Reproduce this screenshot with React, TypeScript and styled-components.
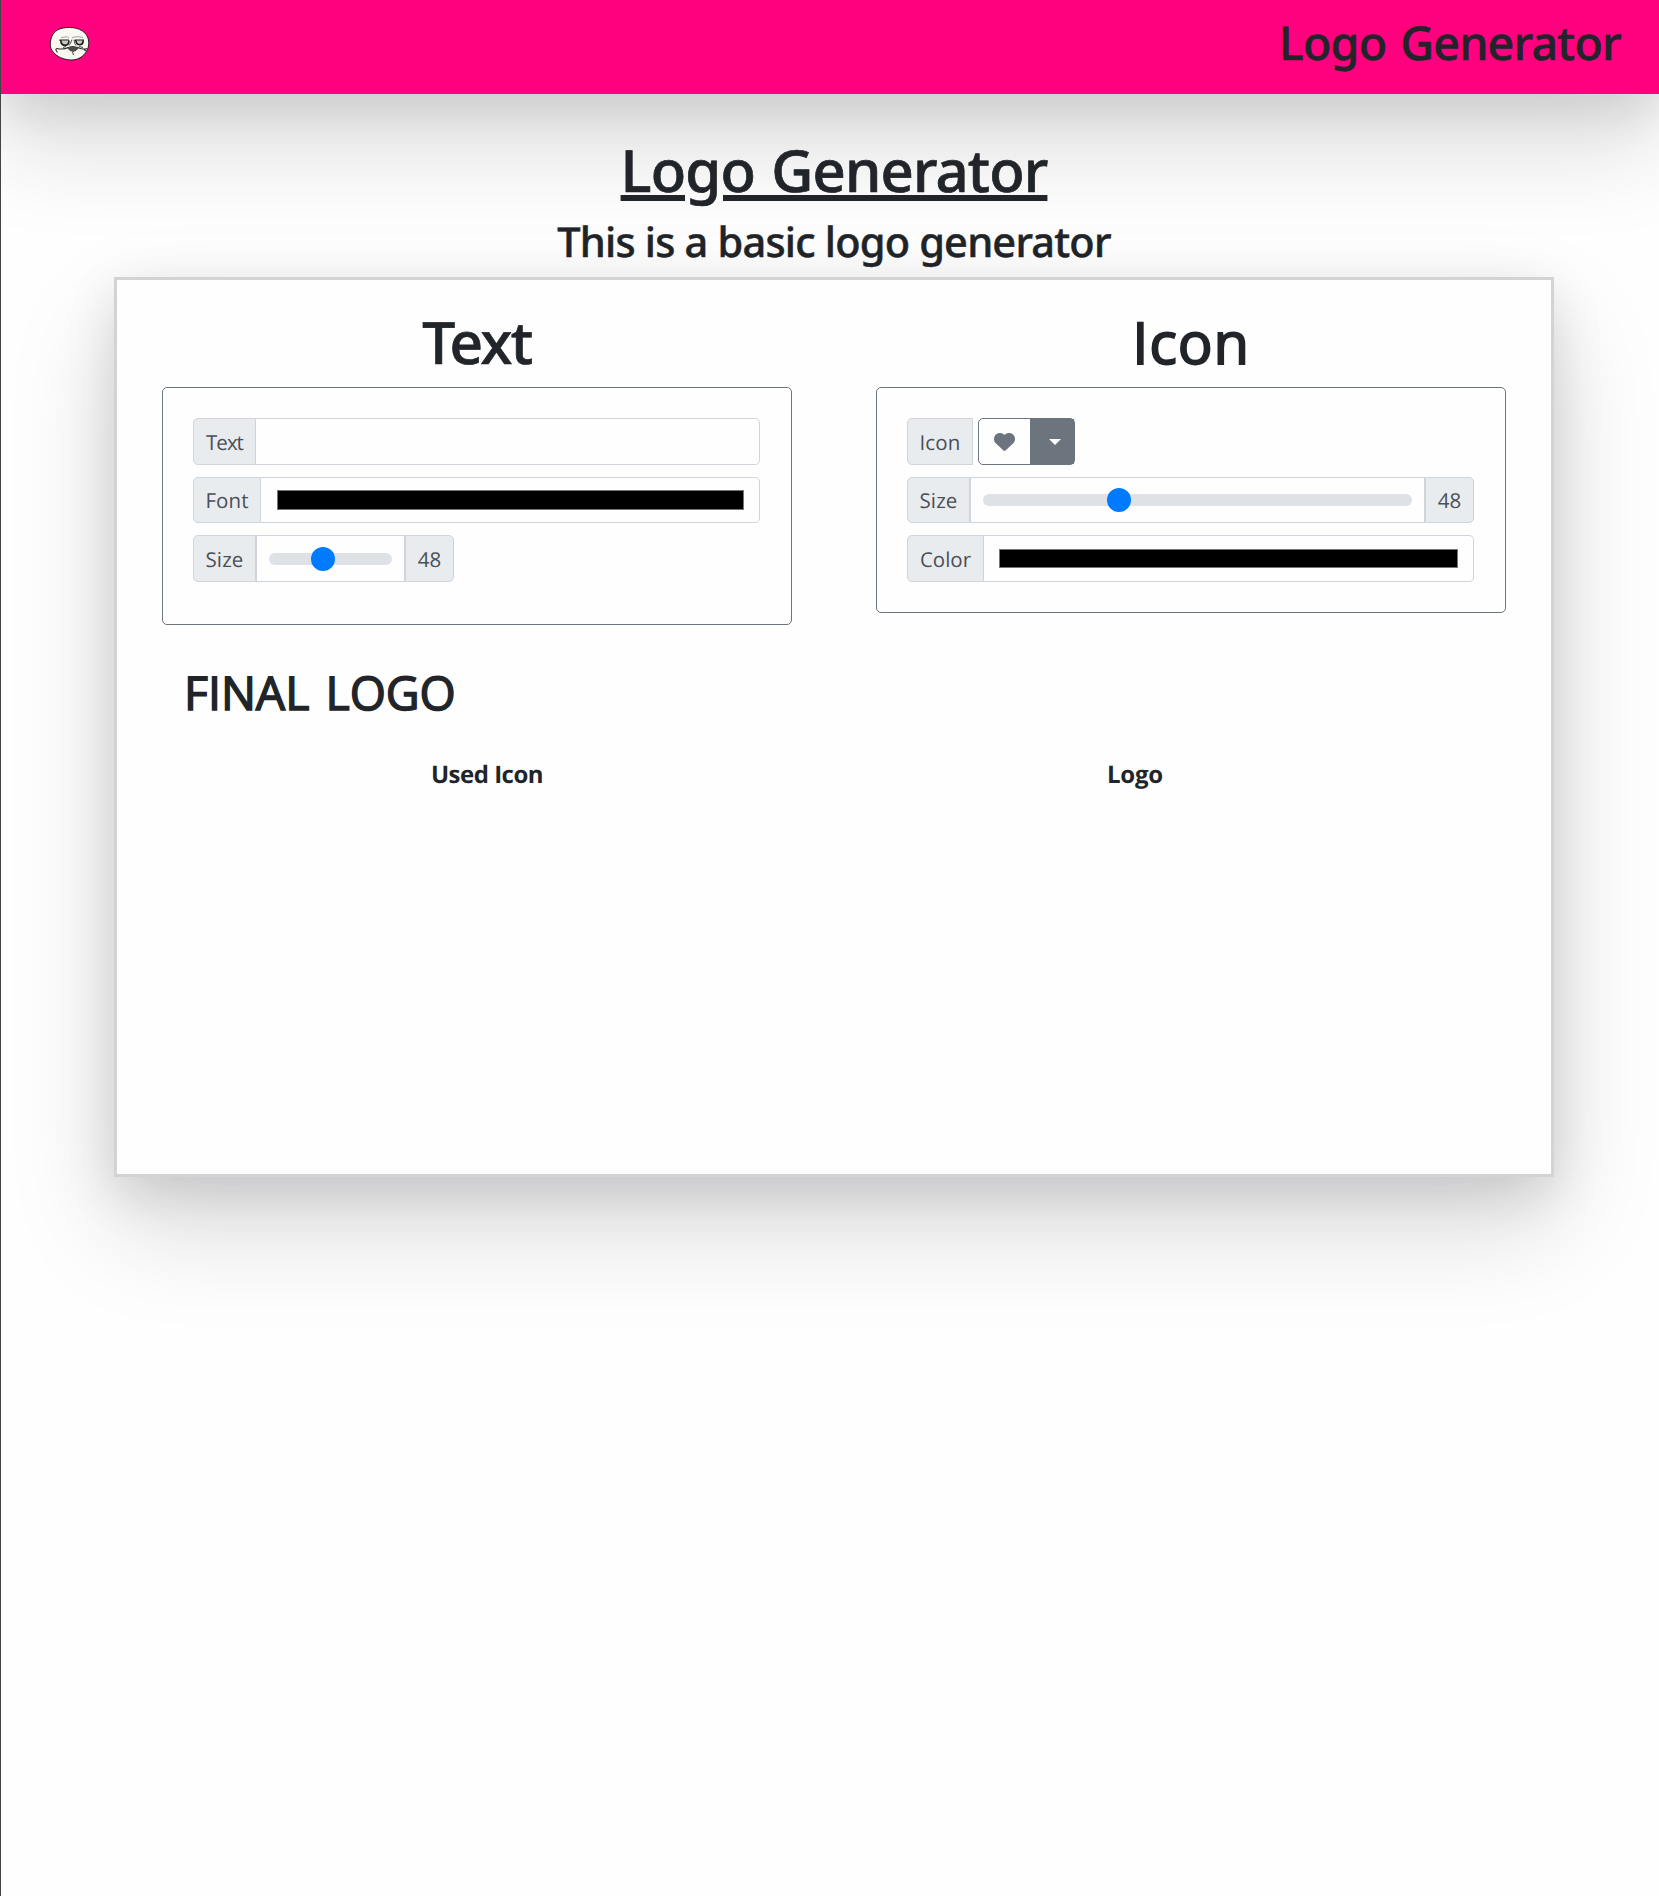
import React, { useState } from "react";
import styled, { createGlobalStyle } from "styled-components";

const GlobalStyle = createGlobalStyle`
  *, *::before, *::after { box-sizing: border-box; }
  body {
    margin: 0;
    background: #fefefe;
    color: #212529;
    font-family: "Open Sans", "Noto Sans", sans-serif;
    text-rendering: geometricPrecision;
  }
`;

const liftedShadow = "0 48px 100px rgba(17, 12, 30, 0.15), 0 16px 48px rgba(0, 0, 0, 0.12)";

const Page = styled.div`
  min-height: 1896px;
  border-left: 1px solid #444;
  overflow: hidden;
`;

const Header = styled.header`
  display: flex;
  align-items: center;
  justify-content: space-between;
  height: 94px;
  padding: 0 38px 6px 48px;
  background: #ff007f;
  box-shadow: ${liftedShadow};
`;

const Mascot = styled.svg`
  display: block;
  width: 41px;
  height: 36px;
`;

const Heading = styled.h1<{ $size: number; $line: number; $spacing?: number; $word?: number }>`
  margin: 0;
  font-family: "Noto Sans", "Open Sans", sans-serif;
  font-size: ${(p) => p.$size}px;
  line-height: ${(p) => p.$line}px;
  letter-spacing: ${(p) => p.$spacing ?? 0}px;
  word-spacing: ${(p) => p.$word ?? 0}px;
  font-weight: 500;
  -webkit-text-stroke: 0.012em currentColor;
  white-space: nowrap;
`;

const PlainHeading = styled(Heading)`
  font-family: "Open Sans", sans-serif;
  font-weight: 400;
  -webkit-text-stroke: 0.032em currentColor;
`;

const Brand = styled(Heading)`
  margin-bottom: 5px;
`;

const Title = styled(Heading)`
  text-decoration: underline;
  text-decoration-thickness: 5.5px;
  text-underline-offset: 3px;
`;

const Subtitle = styled(Heading)`
  padding-top: 1px;
`;

const Main = styled.main`
  display: flex;
  flex-direction: column;
  align-items: center;
  padding: 40px 0 0 8px;
`;

const Card = styled.section`
  width: 1440px;
  height: 900px;
  padding: 26px 3px 0;
  border: 3px solid #d3d3d3;
  background: #fefefe;
  box-shadow: ${liftedShadow};
`;

const Editors = styled.div`
  display: grid;
  grid-template-columns: 1fr 1fr;
  align-items: start;
`;

const Editor = styled.div`
  display: flex;
  flex-direction: column;
  align-items: center;
  gap: 9px;
  padding: 0 42px;
`;

const Panel = styled.div<{ $height: number }>`
  display: grid;
  grid-template-rows: 47px 46px 47px;
  gap: 12px;
  width: 100%;
  height: ${(p) => p.$height}px;
  padding: 30px 31px 30px 30px;
  border: 1px solid #6c757d;
  border-radius: 5px;
`;

const Group = styled.div<{ $width?: number }>`
  display: flex;
  width: ${(p) => (p.$width ? `${p.$width}px` : "100%")};
`;

const Addon = styled.span<{ $width: number; $spacing?: number; $end?: boolean }>`
  display: flex;
  flex: none;
  align-items: center;
  justify-content: center;
  width: ${(p) => p.$width}px;
  padding-top: 2px;
  border: 1px solid #ced4da;
  border-radius: ${(p) => (p.$end ? "0 5px 5px 0" : "5px 0 0 5px")};
  background: #e9ecef;
  color: #495057;
  font-size: 20.5px;
  letter-spacing: ${(p) => p.$spacing ?? 0}px;
`;

const TextField = styled.input`
  flex: 1;
  min-width: 0;
  padding: 0 15px;
  border: 1px solid #ced4da;
  border-left: 0;
  border-radius: 0 5px 5px 0;
  outline: 0;
  background: transparent;
  font: inherit;
`;

const ColorField = styled.div<{ $inset: number; $start: number }>`
  display: flex;
  flex: 1;
  padding: ${(p) => `${p.$inset}px 15px ${p.$inset}px ${p.$start}px`};
  border: 1px solid #ced4da;
  border-left: 0;
  border-radius: 0 5px 5px 0;
`;

const Swatch = styled.span`
  flex: 1;
  border: 1px solid #767676;
  background: #000;
`;

const RangeField = styled.div`
  display: flex;
  flex: 1;
  align-items: center;
  min-width: 0;
  padding: 0 12px;
  border: 1px solid #ced4da;
`;

const Range = styled.input`
  flex: 1;
  min-width: 0;
  height: 24px;
  margin: 0;
  appearance: none;
  background: transparent;

  &::-webkit-slider-runnable-track {
    height: 12px;
    border-radius: 6px;
    background: #dee2e6;
  }

  &::-webkit-slider-thumb {
    appearance: none;
    width: 24px;
    height: 24px;
    margin-top: -6px;
    border-radius: 50%;
    background: #007bff;
  }
`;

const IconPicker = styled.div`
  display: flex;
  width: 97px;
  margin-left: 5px;
  border: 1px solid #6c757d;
  border-radius: 5px;
`;

const IconPreview = styled.span`
  display: flex;
  align-items: center;
  justify-content: center;
  width: 51px;
`;

const IconToggle = styled.button`
  display: flex;
  flex: 1;
  align-items: center;
  justify-content: center;
  padding: 0 0 0 6px;
  border: 0;
  background: #6c757d;
`;

const Caret = styled.span`
  border: 6px solid transparent;
  border-top-color: #fff;
  border-bottom: 0;
`;

const FinalHeading = styled(PlainHeading)`
  margin: 37px 0 38px 64px;
`;

const Results = styled.div`
  display: grid;
  grid-template-columns: 648px 648px;
  padding-left: 43px;
`;

const ResultTitle = styled.div<{ $spacing: number }>`
  font-size: 24px;
  font-weight: 700;
  line-height: 30px;
  letter-spacing: ${(p) => p.$spacing}px;
  text-align: center;
`;

function MascotFace() {
  return (
    <Mascot viewBox="0 0 41 36" fill="none">
      <path
        d="M20.500 1.500C11 1.300 4.600 4.500 2.400 11.500C.2 18.500 1 23.500 6 28C10.500 32 16.500 34 23 34C31 33.800 37 28.500 39.200 21.500C41 14 38.500 8.500 33.500 5C29.500 2.300 25.500 1.600 20.500 1.500Z"
        fill="#f8f7f0"
        stroke="#2b1722"
      />
      <path d="M12 11.800Q18 9.800 20 12M23 11.500Q29 9.800 34 11.500" stroke="#8f8e8a" strokeWidth=".8" />
      <path d="M10.500 14.300H20M25.500 14.300H35" stroke="#202020" strokeWidth="1.500" />
      <path d="M12 14.500Q11.500 18.800 16 19.400Q20 19 20 14.500" fill="#c9c9c4" stroke="#1c1c1c" strokeWidth="1.600" />
      <path d="M27 14.500Q27 18.800 31 18.800Q34.500 18 34 14.500" fill="#c9c9c4" stroke="#1c1c1c" strokeWidth="1.600" />
      <path d="M23 13.500Q21.500 18 20 19.500M25 14Q25.500 18 27 19.500" stroke="#444" strokeWidth=".9" />
      <path
        d="M8.500 26.500Q5.500 23 8 22.500Q15 24 19 21.500L23.500 20.500L29 21.500Q34 24 38 22.500M37 25L35 23.500"
        stroke="#2a2a2a"
        strokeWidth="1.100"
      />
      <path d="M18 22Q23.500 19 30 22Q27 25.500 24 26Q21 25.500 18 22Z" fill="#4a4a4a" />
      <path d="M14 21.500L17 20.500M30 20.500L34 21.500M23.500 26L24.500 29" stroke="#444" strokeWidth="1" />
    </Mascot>
  );
}

function Heart() {
  return (
    <svg width="21" height="18" viewBox="0 0 21 18">
      <path
        d="M10.500 2.100C8.300-.5 4.600-.6 2.200 1.300C-.5 3.600-.7 7.400 1.500 9.900L9.500 17.500Q10.500 18.400 11.500 17.500L19.500 9.900C21.700 7.400 21.500 3.600 18.800 1.300C16.400-.6 12.700-.5 10.500 2.100Z"
        fill="#6c757d"
      />
    </svg>
  );
}

function SizeGroup({ width, max, min }: { width?: number; min: number; max: number }) {
  const [value, setValue] = useState(48);
  return (
    <Group $width={width}>
      <Addon $width={63} $spacing={0.1}>Size</Addon>
      <RangeField>
        <Range type="range" min={min} max={max} value={value} onChange={(e) => setValue(Number(e.target.value))} />
      </RangeField>
      <Addon $width={49} $end>{value}</Addon>
    </Group>
  );
}

export default function App() {
  return (
    <>
      <GlobalStyle />
      <Page>
        <Header>
          <MascotFace />
          <Brand as="div" $size={46.5} $line={60} $spacing={-0.75} $word={2.5}>Logo Generator</Brand>
        </Header>
        <Main>
          <Title $size={58} $line={72} $spacing={-0.85} $word={2}>Logo Generator</Title>
          <Subtitle as="h2" $size={41.5} $line={70} $spacing={-0.8}>This is a basic logo generator</Subtitle>
          <Card>
            <Editors>
              <Editor>
                <Heading as="h2" $size={58.5} $line={72} $spacing={-1.5}>Text</Heading>
                <Panel $height={238}>
                  <Group>
                    <Addon $width={63} $spacing={-1}>Text</Addon>
                    <TextField type="text" />
                  </Group>
                  <Group>
                    <Addon $width={68} $spacing={0.1}>Font</Addon>
                    <ColorField $inset={12} $start={16}><Swatch /></ColorField>
                  </Group>
                  <SizeGroup width={261} min={8} max={102} />
                </Panel>
              </Editor>
              <Editor>
                <PlainHeading as="h2" $size={58} $line={72} $spacing={0.8}>Icon</PlainHeading>
                <Panel $height={226}>
                  <Group>
                    <Addon $width={66} $spacing={0.2}>Icon</Addon>
                    <IconPicker>
                      <IconPreview><Heart /></IconPreview>
                      <IconToggle aria-label="Choose icon"><Caret /></IconToggle>
                    </IconPicker>
                  </Group>
                  <SizeGroup min={8} max={139} />
                  <Group>
                    <Addon $width={77}>Color</Addon>
                    <ColorField $inset={13} $start={15}><Swatch /></ColorField>
                  </Group>
                </Panel>
              </Editor>
            </Editors>
            <FinalHeading as="h2" $size={46.5} $line={60} $spacing={-0.05} $word={4}>FINAL LOGO</FinalHeading>
            <Results>
              <ResultTitle $spacing={-0.5}>Used Icon</ResultTitle>
              <ResultTitle $spacing={-0.2}>Logo</ResultTitle>
            </Results>
          </Card>
        </Main>
      </Page>
    </>
  );
}
